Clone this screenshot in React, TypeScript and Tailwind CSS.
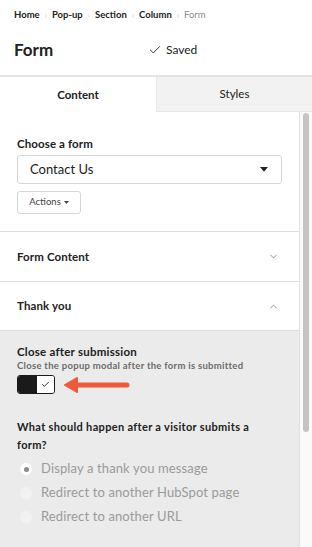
import { Check, ChevronDown, ChevronUp } from "lucide-react";

const crumbs = ["Home", "Pop-up", "Section", "Column"];

const radios = [
  { label: "Display a thank you message", checked: true },
  { label: "Redirect to another HubSpot page", checked: false },
  { label: "Redirect to another URL", checked: false },
];

function Caret({ className }: { className?: string }) {
  return (
    <svg viewBox="0 0 10 6" className={className} fill="currentColor">
      <path d="M0 0h10L5 6z" />
    </svg>
  );
}

function Arrow() {
  return (
    <svg width="68" height="16" viewBox="0 0 68 16" className="ml-2">
      <path d="M64 8H12" stroke="#ee5b3b" strokeWidth="5" strokeLinecap="round" />
      <path d="M14 1L2 8l12 7z" fill="#ee5b3b" stroke="#ee5b3b" strokeWidth="2" strokeLinejoin="round" />
    </svg>
  );
}

export default function App() {
  return (
    <div className="flex h-[547px] w-[312px] flex-col overflow-hidden bg-white font-['Lato',sans-serif] text-[#212121]">
      <header className="px-[14px] pt-[9px]">
        <nav className="flex items-center gap-[5px] text-[9.5px] font-bold leading-[12px]">
          {crumbs.map((c) => (
            <span key={c} className="flex items-center gap-[5px]">
              {c}
              <span className="text-[8px] font-normal text-[#c8c8c8]">›</span>
            </span>
          ))}
          <span className="font-normal text-[#8a8a8a]">Form</span>
        </nav>
        <div className="mt-[17px] flex h-[24px] items-center">
          <h1 className="w-[134px] text-[17px] font-bold">Form</h1>
          <div className="flex items-center gap-[4px] text-[12px]">
            <Check size={14} strokeWidth={1.5} />
            Saved
          </div>
        </div>
      </header>

      <div className="mt-[13px] flex h-[37px] border-t-2 border-[#e3e3e3]">
        <div className="flex w-[156px] items-center justify-center text-[11.5px] font-bold">Content</div>
        <div className="flex flex-1 items-center justify-center border-b border-l border-[#e6e6e6] bg-[#f2f2f2] text-[11.5px]">
          Styles
        </div>
      </div>

      <div className="flex min-h-0 flex-1">
        <main className="w-[300px] border-r border-[#e0e0e0]">
          <section className="px-[17px] pb-[17px] pt-[25px]">
            <h2 className="text-[11.5px] font-bold leading-[14px] tracking-[0.01em]">Choose a form</h2>
            <div className="mt-[4px] flex h-[29px] w-[265px] items-center justify-between rounded-[3px] border border-[#d6d6d6] pl-[12px] pr-[13px] text-[13px]">
              Contact Us
              <Caret className="w-[8px]" />
            </div>
            <button className="mt-[7px] flex h-[23px] w-[64px] items-center justify-center gap-[3px] rounded-[3px] border border-[#d6d6d6] text-[9.5px] text-[#444]">
              Actions
              <Caret className="w-[5px]" />
            </button>
          </section>

          <div className="flex h-[50px] items-center justify-between border-t border-[#dedede] pl-[17px] pr-[20px]">
            <span className="text-[11.5px] font-bold tracking-[0.01em]">Form Content</span>
            <ChevronDown size={11} className="text-[#888]" />
          </div>
          <div className="flex h-[49px] items-center justify-between border-t border-[#dedede] pl-[17px] pr-[20px]">
            <span className="text-[11.5px] font-bold tracking-[0.01em]">Thank you</span>
            <ChevronUp size={11} className="text-[#888]" />
          </div>

          <section className="h-full border-t border-[#dedede] bg-[#ebebeb] px-[17px] pt-[14px]">
            <h3 className="text-[11.5px] font-bold leading-[14px] tracking-[0.02em]">Close after submission</h3>
            <p className="mt-[1px] text-[9.5px] font-bold leading-[12px] tracking-[0.03em] text-[#6b6b6b]">
              Close the popup modal after the form is submitted
            </p>
            <div className="mt-[3px] flex items-center">
              <div className="flex h-[19px] w-[38px] overflow-hidden rounded-[3px] border border-[#1a1a1a]">
                <div className="w-[19px] bg-[#1a1a1a]" />
                <div className="flex flex-1 items-center justify-center bg-white">
                  <Check size={9} strokeWidth={2.5} />
                </div>
              </div>
              <Arrow />
            </div>

            <h3 className="mt-[24px] pr-[30px] text-[11px] font-bold leading-[18px] tracking-[0.03em]">
              What should happen after a visitor submits a form?
            </h3>
            <ul className="mt-[3px] flex flex-col">
              {radios.map((r) => (
                <li
                  key={r.label}
                  className="flex h-[24px] items-center gap-[9px] pl-[3px] text-[13px] tracking-[0.01em] text-[#9a9a9a]"
                >
                  <span
                    className={
                      r.checked
                        ? "flex h-[12px] w-[12px] items-center justify-center rounded-full bg-white"
                        : "flex h-[12px] w-[12px] items-center justify-center rounded-full bg-[#f1f1f1]"
                    }
                  >
                    {r.checked && <span className="h-[5px] w-[5px] rounded-full bg-[#8a8a8a]" />}
                  </span>
                  {r.label}
                </li>
              ))}
            </ul>
          </section>
        </main>

        <div className="flex flex-1 justify-center bg-[#fafafa] pt-[1px]">
          <div className="h-[319px] w-[6px] rounded-full bg-[#c4c4c4]" />
        </div>
      </div>
    </div>
  );
}
